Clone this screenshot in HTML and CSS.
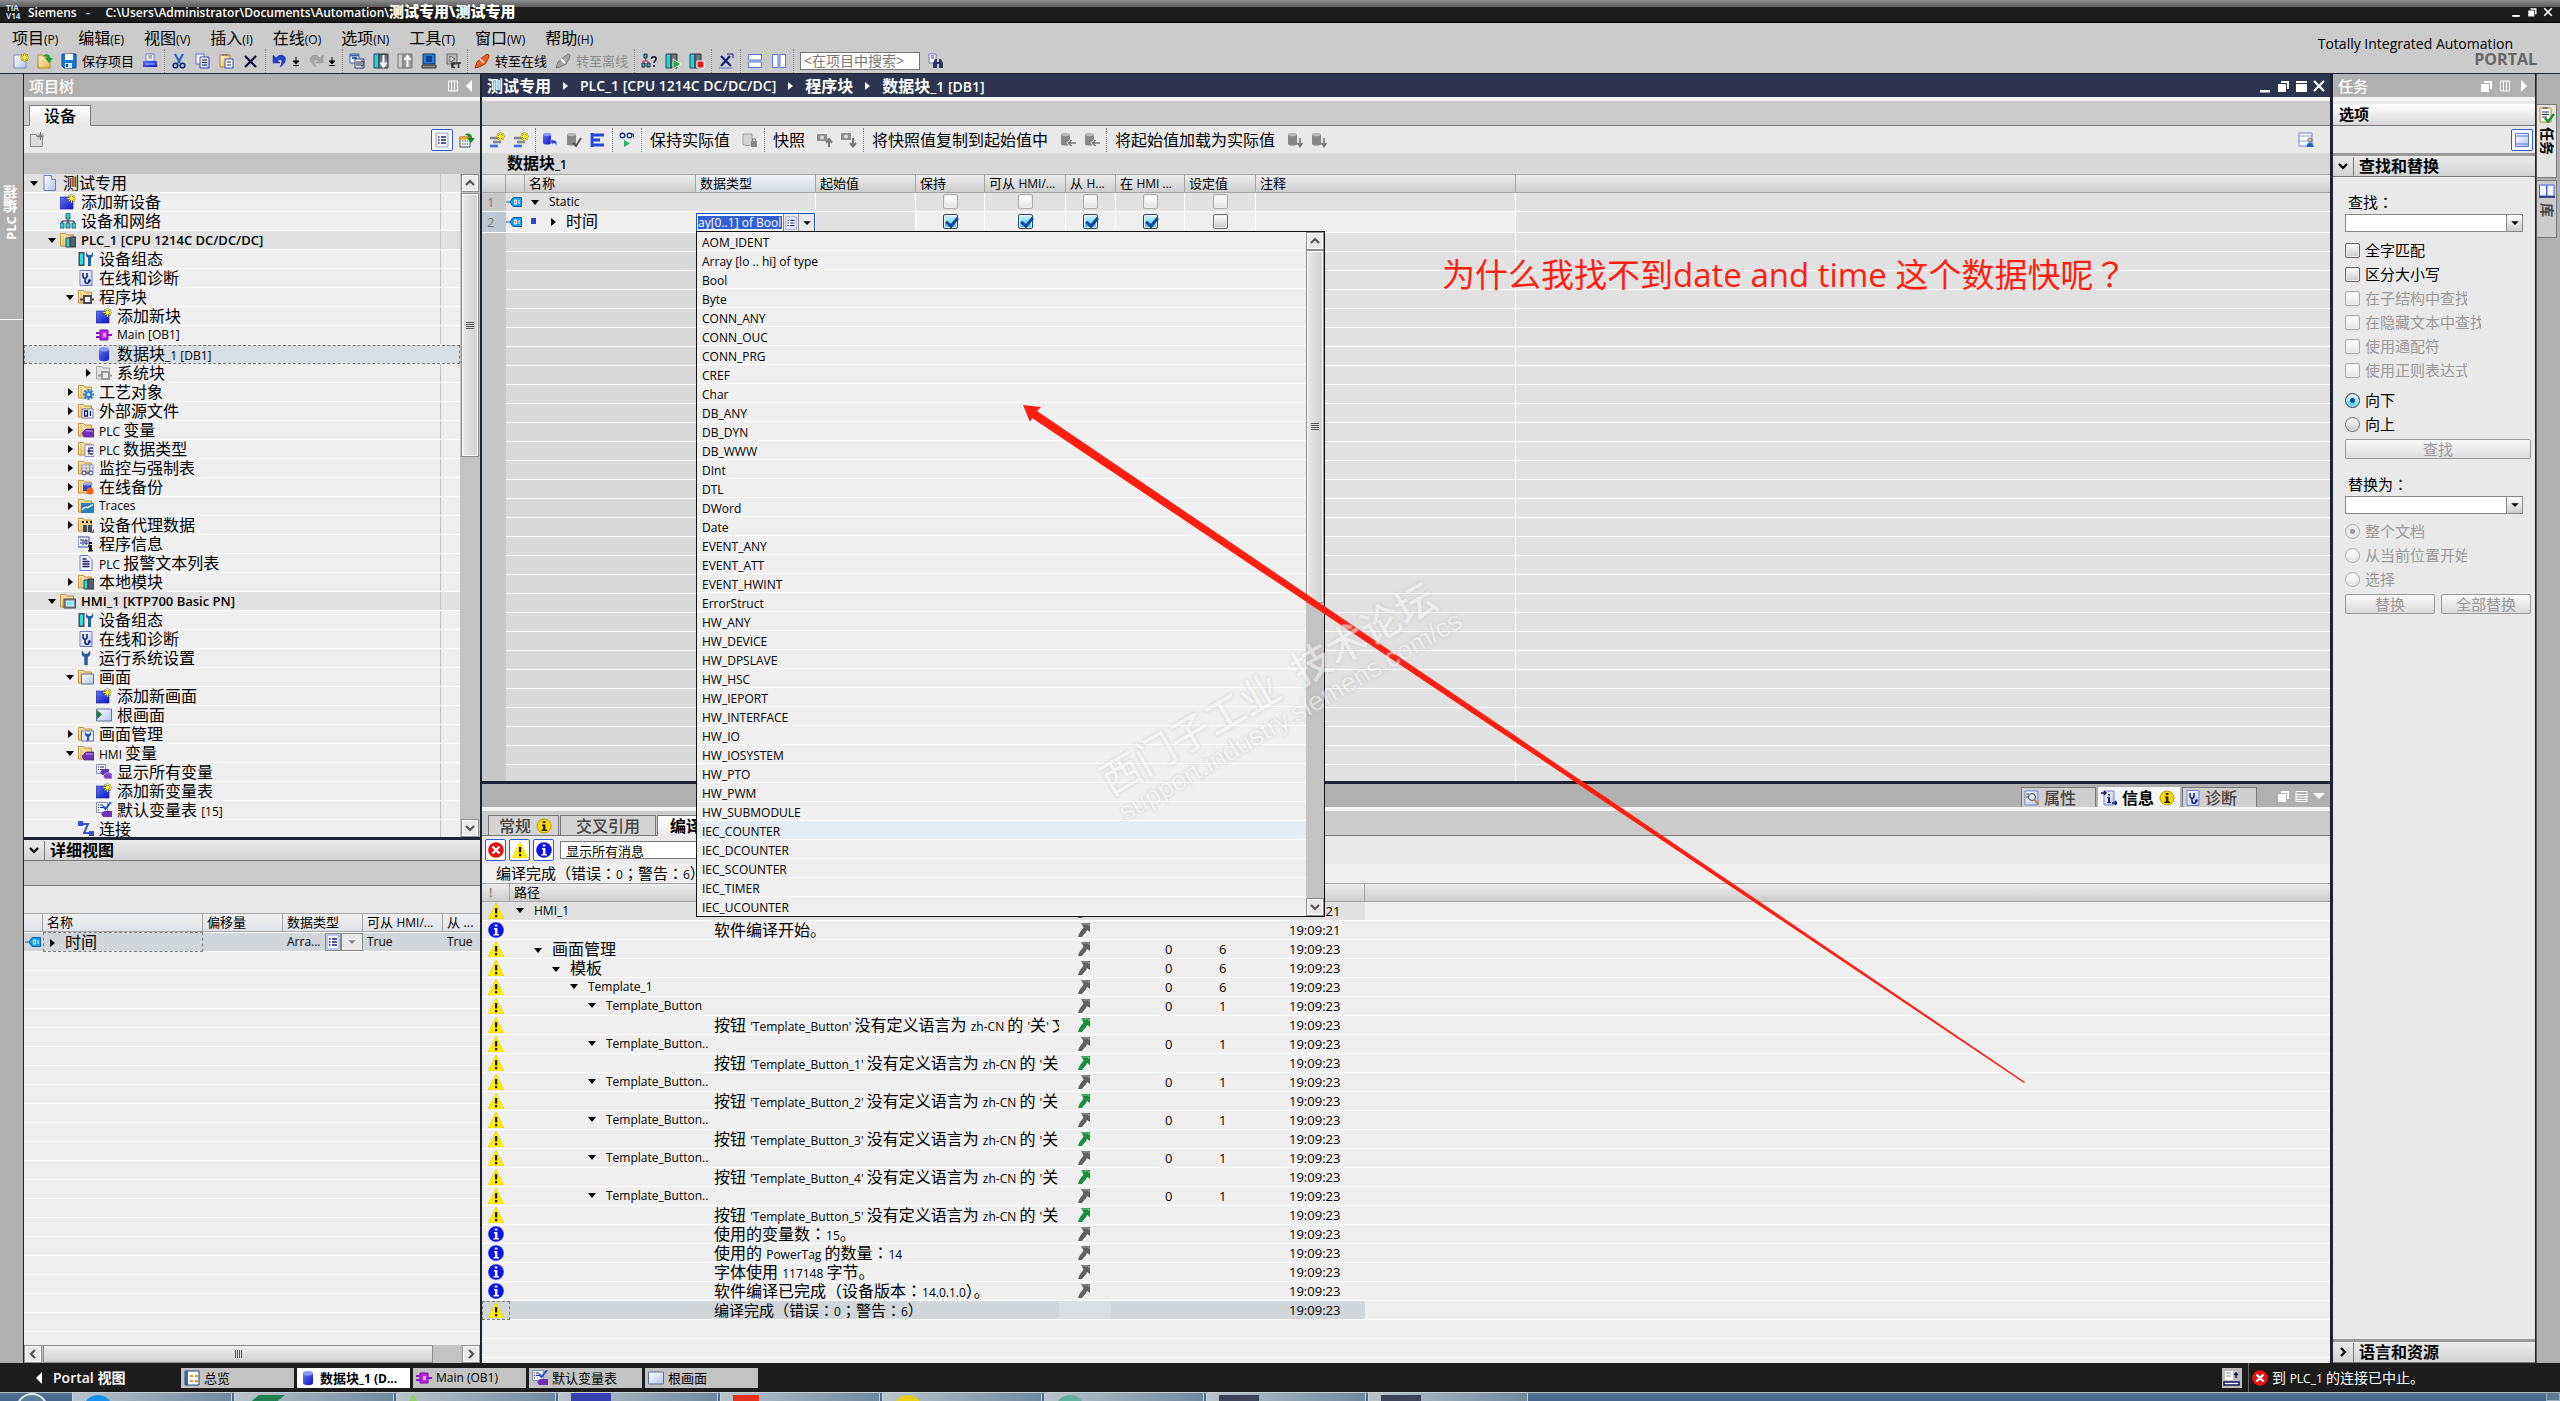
FILE: index.html
```html
<!DOCTYPE html>
<html lang="zh-CN">
<head>
<meta charset="utf-8">
<title>Siemens - 测试专用</title>
<link rel="stylesheet" href="styles.css">
</head>
<body>
<svg class="sprite" aria-hidden="true">
  <defs>
    <linearGradient id="gp" x1="0" y1="0" x2="1" y2="1"><stop offset="0" stop-color="#fff"/><stop offset="1" stop-color="#b4c4f0"/></linearGradient>
    <linearGradient id="gf" x1="0" y1="0" x2="1" y2="1"><stop offset="0" stop-color="#fff3c8"/><stop offset="1" stop-color="#e8b850"/></linearGradient>
    <linearGradient id="gb" x1="0" y1="0" x2="1" y2="1"><stop offset="0" stop-color="#5a78f0"/><stop offset="1" stop-color="#1414c8"/></linearGradient>
    <linearGradient id="gt" x1="0" y1="0" x2="0" y2="1"><stop offset="0" stop-color="#5a5c68"/><stop offset="1" stop-color="#9a9ca6"/></linearGradient>
  </defs>
  <symbol id="star" viewBox="0 0 16 16"><path d="M11.500 0v9M7 4.500h9M8.500 1.500l6 6M14.500 1.500l-6 6" stroke="#8a8a10" stroke-width="1.600"/><path d="M11.500 .5v8M7.500 4.500h8M9 2l5 5M14 2l-5 5" stroke="#ffee30" stroke-width="1"/></symbol>
  <symbol id="page" viewBox="0 0 16 16"><path d="M2 .5h7.500l4 4v11H2z" fill="url(#gp)" stroke="#6c7cc0"/><path d="M9.500.5v4h4" fill="#fff" stroke="#6c7cc0"/></symbol>
  <symbol id="new" viewBox="0 0 16 16"><path d="M1 2h8v3h4v10H1z" fill="url(#gp)" stroke="#7c8cc8"/><use href="#star"/></symbol>
  <symbol id="newgray" viewBox="0 0 16 16"><path d="M1.500 2.500h6v2h6v10h-12z" fill="#dcdcdc" stroke="#8c8c8c"/><path d="M11.500 0v8M8 4h7M9 1.500l5 5M14 1.500l-5 5" stroke="#777"/></symbol>
  <symbol id="open" viewBox="0 0 16 16"><path d="M1 2h5l1 2h6v11H1z" fill="url(#gf)" stroke="#b88820"/><path d="M6 3c3-3 7-2 7 2h3l-4 5-4-5h2c0-2-2-2-4-2z" fill="#18a030"/></symbol>
  <symbol id="save" viewBox="0 0 16 16"><path d="M1 1h14v14H3l-2-2z" fill="#1878d0" stroke="#0c4890"/><path d="M4 1h8v6H4z" fill="#fff"/><path d="M4 10h7v5H4z" fill="#d8e8f8"/><path d="M5 11h2v3H5z" fill="#0c4890"/></symbol>
  <symbol id="print" viewBox="0 0 16 16"><path d="M4 1h8v7H4z" fill="#fff" stroke="#667ad0"/><path d="M6 3h4M6 5h4" stroke="#667"/><path d="M1 8h14v6H1z" fill="url(#gb)"/><path d="M3 11h10" stroke="#a8b8ff"/></symbol>
  <symbol id="cut" viewBox="0 0 16 16"><path d="M4 1l5 9M12 1L7 10" stroke="#2060c0" stroke-width="2"/><circle cx="4.500" cy="12.500" r="2.300" fill="none" stroke="#102878" stroke-width="1.600"/><circle cx="11.500" cy="12.500" r="2.300" fill="none" stroke="#102878" stroke-width="1.600"/></symbol>
  <symbol id="copy" viewBox="0 0 16 16"><path d="M1 1h8v10H1z" fill="#fff" stroke="#5468c0"/><path d="M5 4h9v11H5z" fill="url(#gp)" stroke="#3448b0"/><path d="M7 7h5M7 9.500h5M7 12h5" stroke="#223"/></symbol>
  <symbol id="paste" viewBox="0 0 16 16"><path d="M1 2h10v12H1z" fill="url(#gf)" stroke="#a88020"/><path d="M3 1h6v2H3z" fill="#888"/><path d="M6 6h8v9H6z" fill="#fff" stroke="#3448b0"/><path d="M8 9h4M8 12h4" stroke="#223"/></symbol>
  <symbol id="del" viewBox="0 0 16 16"><path d="M2 3l11 11M13 3L2 14" stroke="#101040" stroke-width="2.200"/></symbol>
  <symbol id="undo" viewBox="0 0 16 16"><path d="M1 2v8h7L5.500 7.500C9 5 12 7 8 14c8-5 7-13-1-11.500L4 5z" fill="#2040d0" stroke="#102090" stroke-width=".5"/></symbol>
  <symbol id="redo" viewBox="0 0 16 16"><path d="M15 2v8H8l2.500-2.500C7 5 4 7 8 14 0 9 1 1 9 2.500L12 5z" fill="#a8a8a8" stroke="#888" stroke-width=".5"/></symbol>
  <symbol id="dd" viewBox="0 0 8 16"><path d="M4 4v4M1 8h6L4 11zM1 12.500h6" stroke="currentColor" fill="currentColor"/></symbol>
  <symbol id="compile" viewBox="0 0 16 16"><path d="M1 1h9v9H1z" fill="#fff" stroke="#3860a8"/><path d="M1 2.500h9M3 5h5" stroke="#3860a8" stroke-width="2"/><path d="M6 6h9v9H6z" fill="#f4f6ff" stroke="#223c88"/><path d="M8 8v5M10 8v5M12 8h2v5h-2z" stroke="#223" fill="none"/></symbol>
  <symbol id="dl" viewBox="0 0 16 16"><path d="M1 1h5v14H1z" fill="#28d0d8" stroke="#184858"/><path d="M6 1h9v14H6z" fill="url(#gt)" stroke="#333"/><path d="M10.500 2v11M7.500 9.500l3 4 3-4" fill="none" stroke="#fff" stroke-width="2"/></symbol>
  <symbol id="ul" viewBox="0 0 16 16"><path d="M1 1h5v14H1z" fill="#ccc" stroke="#777"/><path d="M6 1h9v14H6z" fill="#999" stroke="#777"/><path d="M10.500 14V4M7.500 7l3-4 3 4" fill="none" stroke="#fff" stroke-width="2"/></symbol>
  <symbol id="sim" viewBox="0 0 16 16"><path d="M2 1h12v10H2z" fill="#2080e0" stroke="#234"/><path d="M5 3h6v6H5z" fill="#104090"/><path d="M1 12h14v3H1z" fill="#888" stroke="#333"/></symbol>
  <symbol id="rt" viewBox="0 0 16 16"><path d="M2 1h10v10H2z" fill="#bbb" stroke="#666"/><path d="M5 3l5 3-5 3z" fill="#fff" stroke="#555"/><path d="M7 15v-5h3l-3 3 3 2M11 10h5M13.500 10v5" stroke="#333" fill="none" stroke-width="1.500"/></symbol>
  <symbol id="plug" viewBox="0 0 16 16"><path d="M1 15l2-6 6-5 4-3 2 1-1 4-3 5-6 3z" fill="#f06020" stroke="#a83008"/><path d="M6 6l4 4" stroke="#fff" stroke-width="1.200"/></symbol>
  <symbol id="plugoff" viewBox="0 0 16 16"><path d="M1 15l2-6 6-5 4-3 2 1-1 4-3 5-6 3z" fill="#a4a4a4" stroke="#777"/><path d="M6 6l4 4" stroke="#fff" stroke-width="2"/></symbol>
  <symbol id="acc" viewBox="0 0 16 16"><path d="M3 1h3v4H3zM1 10h3v4H1zM6 10h3v4H6z" fill="#28b8b8" stroke="#224"/><path d="M4.500 5v3M2 10V8h5v2" fill="none" stroke="#b02050"/><path d="M10.500 6c0-3 5-3 4.500 0 0 2-2 2-2 4M13 12v2" fill="none" stroke="#112" stroke-width="1.600"/></symbol>
  <symbol id="start" viewBox="0 0 16 16"><path d="M1 1h5v14H1z" fill="#28d0d8" stroke="#184858"/><path d="M6 1h6v14H6z" fill="#707480" stroke="#333"/><path d="M8 6l8 5-8 5z" fill="#20b040" stroke="#fff" stroke-width=".8"/></symbol>
  <symbol id="stop" viewBox="0 0 16 16"><path d="M1 1h5v14H1z" fill="#28d0d8" stroke="#184858"/><path d="M6 1h6v14H6z" fill="#707480" stroke="#333"/><path d="M8 8h7v7H8z" fill="#e81818" stroke="#fff"/></symbol>
  <symbol id="xref" viewBox="0 0 16 16"><path d="M3 3l10 10M12 3L3 13" stroke="#102080" stroke-width="2.200"/><path d="M9 1h6v4" fill="none" stroke="#102080"/><path d="M1 15h13" stroke="#5870d0"/></symbol>
  <symbol id="sph" viewBox="0 0 16 16"><path d="M1.500 1.500h13v5.500h-13zM1.500 9h13v5.500h-13z" fill="#fff" stroke="#5878e0"/></symbol>
  <symbol id="spv" viewBox="0 0 16 16"><path d="M1.500 1.500h5.500v13H1.500zM9 1.500h5.500v13H9z" fill="#fff" stroke="#5878e0"/></symbol>
  <symbol id="win" viewBox="0 0 16 16"><path d="M1.500 1.500h13v13h-13z" fill="url(#gp)" stroke="#5878e0"/><path d="M1.500 4h13M1.500 12h13" stroke="#5878e0"/></symbol>
  <symbol id="find" viewBox="0 0 16 16"><path d="M1 1h7v9H1z" fill="#fff" stroke="#667ad0"/><path d="M3 3h3M3 5h3" stroke="#446"/><path d="M5 15v-5l2-4h2v3h2V6h2l2 4v5h-4v-4H9v4z" fill="#283860"/></symbol>
  <symbol id="add" viewBox="0 0 16 16"><path d="M0 3h13v12H0z" fill="url(#gb)" stroke="#1818a0" stroke-width=".6"/><use href="#star"/></symbol>
  <symbol id="net" viewBox="0 0 16 16"><path d="M6 0h4v6H6zM0 10h4v5H0zM6 10h4v5H6zM12 10h4v5h-4z" fill="#38c8d0" stroke="#205868" stroke-width=".8"/><path d="M8 6v4M2 10V8h12v2" fill="none" stroke="#224"/></symbol>
  <symbol id="folder" viewBox="0 0 16 16"><path d="M.5 1.500h5l1 1.500h7v11H.5z" fill="url(#gf)" stroke="#c09038"/><path d="M3 3v10" stroke="#d8b060"/></symbol>
  <symbol id="folderg" viewBox="0 0 16 16"><path d="M.5 1.500h5l1 1.500h7v11H.5z" fill="#e4e4e4" stroke="#a4a4a4"/></symbol>
  <symbol id="o-plc" viewBox="0 0 16 16"><path d="M6 6h4v9H6z" fill="#30d8d8" stroke="#244"/><path d="M10 5h6v10h-6z" fill="#556070" stroke="#334"/></symbol>
  <symbol id="o-hmi" viewBox="0 0 16 16"><path d="M4 6h11.500v9H4z" fill="#888c98" stroke="#445"/><path d="M6.500 8h7v5h-7z" fill="#80e8f0" stroke="#fff" stroke-width=".6"/></symbol>
  <symbol id="o-blk" viewBox="0 0 16 16"><path d="M6 7h7v7H6z" fill="#fff" stroke="#484c58" stroke-width="2"/><path d="M2 10.500h4M13 10.500h3" stroke="#484c58" stroke-width="2"/></symbol>
  <symbol id="o-blkg" viewBox="0 0 16 16"><path d="M6 7h7v7H6z" fill="#eee" stroke="#999" stroke-width="2"/><path d="M2 10.500h4M13 10.500h3" stroke="#999" stroke-width="2"/></symbol>
  <symbol id="o-gear" viewBox="0 0 16 16"><path d="M10.500 5v11M5 10.500h11M6.500 6.500l8 8M14.500 6.500l-8 8" stroke="#2878e0" stroke-width="2"/><circle cx="10.500" cy="10.500" r="1.500" fill="#fff"/></symbol>
  <symbol id="o-01" viewBox="0 0 16 16"><path d="M4 6h11v9H4z" fill="#fff" stroke="#707890"/><path d="M6.500 8h3v5h-3zM12.500 8v5" fill="none" stroke="#101860" stroke-width="1.400"/></symbol>
  <symbol id="o-tag" viewBox="0 0 16 16"><path d="M4 11l4-4h8v8H6z" fill="#7030b8" stroke="#481080" stroke-width=".6"/><path d="M8 9h7" stroke="#c8a0f0"/></symbol>
  <symbol id="o-str" viewBox="0 0 16 16"><path d="M7 4h9v11.500H7z" fill="#f4f6ff" stroke="#8890c0"/><path d="M12 7h3M9.500 10h5.500M12 13h3M11 6.500v7" stroke="#202878" stroke-width="1.300"/></symbol>
  <symbol id="o-watch" viewBox="0 0 16 16"><path d="M4 5h11v6H4z" fill="#fff" stroke="#8890a8"/><path d="M4 8h11M8 5v6M11.500 5v6" stroke="#8890a8"/><circle cx="6" cy="13" r="2" fill="#fff" stroke="#203890"/><circle cx="13" cy="13" r="2" fill="#fff" stroke="#203890"/><path d="M8 13h3" stroke="#203890"/></symbol>
  <symbol id="o-bak" viewBox="0 0 16 16"><path d="M5 5h8v7H5z" fill="#3048d0"/><ellipse cx="9" cy="5" rx="4" ry="1.500" fill="#90a8ff"/><circle cx="12" cy="12" r="3.600" fill="#f06018"/></symbol>
  <symbol id="o-trc" viewBox="0 0 16 16"><path d="M3 5h13v10H3z" fill="#2880b8"/><path d="M4 12c3-5 5-1 7-3s2-2 4-2" fill="none" stroke="#fff" stroke-width="1.300"/></symbol>
  <symbol id="o-prx" viewBox="0 0 16 16"><path d="M4 4h2v2H4zM8 4h2v2H8zM12 4h2v2h-2z" fill="#222"/><path d="M5 8h4v7H5zM10 8h4v7h-4z" fill="#444c58"/><path d="M12 15h4v-3" stroke="#222" fill="none"/></symbol>
  <symbol id="o-scr" viewBox="0 0 16 16"><path d="M3.500 5h12v10h-12z" fill="url(#gp)" stroke="#607090"/></symbol>
  <symbol id="o-wr" viewBox="0 0 16 16"><path d="M3.500 5h12v10h-12z" fill="#dfe8fa" stroke="#6078a0"/><path d="M7 6v3l2 2v4h2v-4l2-2V6l-2 2H9z" fill="#2058a8"/></symbol>
  <symbol id="cfg" viewBox="0 0 16 16"><path d="M.5 1h6v14h-6z" fill="#444c58"/><path d="M2 2.500h3v11H2z" fill="#30e0e0"/><path d="M8 1v4l2 2v8h3V7l2-2V1l-2 3h-3z" fill="#2060a8"/></symbol>
  <symbol id="wrench" viewBox="0 0 16 16"><path d="M4 1v4l2.500 2v8h3V7L12 5V1l-2.500 3h-3z" fill="#2060a8" stroke="#18487c" stroke-width=".4"/></symbol>
  <symbol id="diag" viewBox="0 0 16 16"><path d="M2 .5h12v15H2z" fill="url(#gp)" stroke="#7080d0"/><path d="M5 3v3c0 3 4 3 4 0V3M7 8v3c0 3 4 3 4 0" fill="none" stroke="#101868" stroke-width="1.500"/><circle cx="11.500" cy="10.500" r="1.300" fill="#101868"/></symbol>
  <symbol id="ob" viewBox="0 0 16 16"><path d="M4 3h8v10H4z" fill="#c020f0" stroke="#7010a0"/><path d="M7 6h3v4H7z" fill="#f0b0ff"/><path d="M0 6h4M0 10h4M12 8h4" stroke="#9010d0" stroke-width="2"/></symbol>
  <symbol id="db" viewBox="0 0 16 16"><path d="M3 3v10c0 3 10 3 10 0V3z" fill="url(#gb)"/><ellipse cx="8" cy="3.300" rx="5" ry="2.300" fill="#8898ff"/></symbol>
  <symbol id="info" viewBox="0 0 16 16"><path d="M0 1h11v10H0z" fill="#f4f6ff" stroke="#3850a0"/><path d="M2 4h2M2 7h2M5 3v6M7 4h2v4H7z" stroke="#102070" fill="none"/><path d="M11 6h3v2h-3zM10 9h4v5h1v1.500h-5V14h1v-3h-1z" fill="#111"/></symbol>
  <symbol id="txt" viewBox="0 0 16 16"><path d="M2 .5h8l4 4v11H2z" fill="#eef2ff" stroke="#7080d0"/><path d="M4.500 4h4M4.500 6.500h7M4.500 9h7M4.500 11.500h7" stroke="#181c60" stroke-width="1.300"/></symbol>
  <symbol id="root" viewBox="0 0 16 16"><path d="M.5 2h15v12H.5z" fill="url(#gp)" stroke="#607090"/><path d="M1 3l5 4.500L1 12z" fill="#108828"/></symbol>
  <symbol id="scr" viewBox="0 0 16 16"><path d="M.5 2h15v12H.5z" fill="url(#gp)" stroke="#607090"/></symbol>
  <symbol id="alltag" viewBox="0 0 16 16"><path d="M.5.5h9v9h-9z" fill="#f4f6ff" stroke="#8890c0"/><path d="M2 3h1M4 3h4M2 5.500h1M4 5.500h3" stroke="#202878"/><path d="M4 8l3-3h6v6H6z" fill="#6838b0"/><path d="M7 12l3-3h6v6H9z" fill="#8040c8" stroke="#fff" stroke-width=".5"/></symbol>
  <symbol id="deftag" viewBox="0 0 16 16"><path d="M.5.500h11v10h-11z" fill="#f4f6ff" stroke="#8890c0"/><path d="M2 3h1M4 3h3M2 5.500h1M4 5.500h3M2 8h1" stroke="#202878"/><path d="M7 4l2.500 3L15 0" fill="none" stroke="#2050d0" stroke-width="2"/><path d="M5 12l3-3h8v6H7z" fill="#7030b8"/></symbol>
  <symbol id="conn" viewBox="0 0 16 16"><path d="M3 3h7l-4 9h7" fill="none" stroke="#3858d0" stroke-width="2"/><path d="M0 0h5v5H0zM11 10h5v5h-5z" fill="#3050d8"/></symbol>
  <symbol id="tag" viewBox="0 0 16 16"><path d="M0 8h4l3-4.500h8.500v9H7L4 8" fill="#18a0e8" stroke="#0860a8"/><path d="M8.500 6h2v4h-2zM13 6v4" fill="none" stroke="#fff"/></symbol>
  <symbol id="lst" viewBox="0 0 16 16"><path d="M2 1h12v14H2z" fill="#f4f6ff" stroke="#8ca0e0"/><path d="M4 5h1.500M7 5h5M4 8h1.500M7 8h5M4 11h1.500M7 11h5" stroke="#202878" stroke-width="1.300"/></symbol>
  <symbol id="ins" viewBox="0 0 16 16"><path d="M1 6h9M4 10h8" stroke="#7c8494" stroke-width="2.600"/><path d="M1 14h8" stroke="#4868e0" stroke-width="2.600"/><use href="#star"/></symbol>
  <symbol id="dbr" viewBox="0 0 16 16"><path d="M1 2v9c0 2 8 2 8 0V2z" fill="url(#gb)"/><ellipse cx="5" cy="2.500" rx="4" ry="1.700" fill="#8898ff"/><path d="M8 9l3-2v1.500c3-1 5 2 3 6 0-3-1-3.500-3-3V13z" fill="#2040d0" stroke="#fff" stroke-width=".4"/></symbol>
  <symbol id="dbg" viewBox="0 0 16 16"><path d="M1 2v10c0 2 9 2 9 0V2z" fill="#888"/><ellipse cx="5.500" cy="2.500" rx="4.500" ry="1.700" fill="#bbb"/><path d="M7 11l3 3 5-8" fill="none" stroke="#555" stroke-width="2"/></symbol>
  <symbol id="dbc" viewBox="0 0 16 16"><path d="M1 2v10c0 2 9 2 9 0V2z" fill="#888"/><ellipse cx="5.500" cy="2.500" rx="4.500" ry="1.700" fill="#bbb"/><path d="M16 11H9M11.500 8L8.500 11l3 3" fill="none" stroke="#e9e9e9" stroke-width="3"/><path d="M16 11H9M11.500 8L8.500 11l3 3" fill="none" stroke="#777" stroke-width="1.500"/></symbol>
  <symbol id="dbd" viewBox="0 0 16 16"><path d="M1 2v10c0 2 9 2 9 0V2z" fill="#888"/><ellipse cx="5.500" cy="2.500" rx="4.500" ry="1.700" fill="#bbb"/><path d="M13 6v8M10.500 11l2.500 3.500 2.500-3.500" fill="none" stroke="#777" stroke-width="1.600"/></symbol>
  <symbol id="dbl" viewBox="0 0 16 16"><path d="M1 2v10c0 2 9 2 9 0V2z" fill="#d4d4d4" stroke="#999"/><path d="M9 9h6v6H9z" fill="#888"/><path d="M10.500 9V7h3v2" fill="none" stroke="#777"/></symbol>
  <symbol id="net2" viewBox="0 0 16 16"><path d="M2 1v14M2 3h12M2 8h8M2 13h12" stroke="#2848d8" stroke-width="2.800"/></symbol>
  <symbol id="glas" viewBox="0 0 16 16"><circle cx="3.500" cy="3.500" r="2.300" fill="#fff" stroke="#203080" stroke-width="1.400"/><circle cx="10.500" cy="3.500" r="2.300" fill="#fff" stroke="#203080" stroke-width="1.400"/><path d="M12.500 2h2v3" stroke="#203080" fill="none"/><path d="M5 8l6 3.500L5 15z" fill="#20b860"/></symbol>
  <symbol id="cam" viewBox="0 0 16 16"><path d="M0 2h10v7H0z" fill="#909090"/><circle cx="5" cy="5.500" r="2" fill="#ddd"/><path d="M12 15V8M9 10.500L12 7l3 3.500" fill="none" stroke="#777" stroke-width="2"/></symbol>
  <symbol id="camd" viewBox="0 0 16 16"><path d="M0 1h10v7H0z" fill="#909090"/><circle cx="5" cy="4.500" r="2" fill="#ddd"/><path d="M12 6v8M9 11l3 3.500 3-3.500" fill="none" stroke="#777" stroke-width="2"/></symbol>
  <symbol id="dict" viewBox="0 0 16 16"><path d="M1 5h10v10H1z" fill="#fff" stroke="#345"/><path d="M1 6h10" stroke="#e8a020" stroke-width="3"/><path d="M3 9h6M3 12h6" stroke="#234" stroke-dasharray="1.500 1"/><path d="M6 3c3-3 7-1 7 3h3l-4 5-4-5h2c0-2-2-3-4-3z" fill="#188828"/></symbol>
  <symbol id="usr" viewBox="0 0 16 16"><path d="M1 1h13v13H1z" fill="#fff" stroke="#6c80d8"/><path d="M1 4h13M1 9h9" stroke="#8c9ce0"/><circle cx="12" cy="8" r="2" fill="#f0c8a0" stroke="#223" stroke-width=".6"/><path d="M8.500 15c0-6 7-6 7 0z" fill="#1868b8"/></symbol>
  <symbol id="goto" viewBox="0 0 16 16"><path d="M5 1h9v9l-3-2c-1 3-3 4-5 7H2c1-4 3-6 5.500-9.500z" fill="currentColor"/><path d="M6 2h7v2" stroke="#fff" stroke-opacity=".4" fill="none"/></symbol>
  <symbol id="warn" viewBox="0 0 16 16"><path d="M8 0l8 16H0z" fill="#ffee00" stroke="#d8c800" stroke-width=".5"/><path d="M7 5h2.200v5.500H7zM7 12h2.200v2.200H7z" fill="#111"/></symbol>
  <symbol id="inf" viewBox="0 0 16 16"><circle cx="8" cy="8" r="7.800" fill="#0c14e8"/><path d="M6.800 2.500h2.600v2H6.800zM6 6h3.400v6H11v1.500H5.500V12H7V7.500H6z" fill="#fff"/></symbol>
  <symbol id="infy" viewBox="0 0 16 16"><circle cx="8" cy="8" r="7" fill="#f8d800" stroke="#b89800"/><path d="M6.800 3h2.600v2H6.800zM6 6.500h3.400v5H11V13H5.500v-1.500H7V8H6z" fill="#222"/></symbol>
  <symbol id="err" viewBox="0 0 16 16"><circle cx="8" cy="8" r="7.800" fill="#e81010"/><path d="M4.500 4.500l7 7M11.500 4.500l-7 7" stroke="#fff" stroke-width="2.400"/></symbol>
  <symbol id="min" viewBox="0 0 16 16"><path d="M3 12h10v2.500H3z" fill="currentColor"/></symbol>
  <symbol id="rest" viewBox="0 0 16 16"><path d="M6 3h8v8h-2V5H6z" fill="currentColor"/><path d="M3 6h8v8H3z" fill="currentColor"/></symbol>
  <symbol id="max" viewBox="0 0 16 16"><path d="M3 3h11v2H3zM3 6h11v8H3z" fill="currentColor"/></symbol>
  <symbol id="cls" viewBox="0 0 16 16"><path d="M3 3l10 10M13 3L3 13" stroke="currentColor" stroke-width="2.200"/></symbol>
  <symbol id="bars" viewBox="0 0 16 16"><path d="M3.500 3h9v10h-9zM6.500 3v10M9.500 3v10" fill="none" stroke="currentColor"/></symbol>
  <symbol id="rows" viewBox="0 0 16 16"><path d="M3 3.500h11v10H3zM3 6.500h11M3 9h11M3 11.500h11" fill="none" stroke="currentColor"/></symbol>
  <symbol id="tl" viewBox="0 0 16 16"><path d="M11 2v12L5 8z" fill="currentColor"/></symbol>
  <symbol id="tr" viewBox="0 0 16 16"><path d="M5 2v12l6-6z" fill="currentColor"/></symbol>
  <symbol id="td" viewBox="0 0 16 16"><path d="M2 5h12l-6 6z" fill="currentColor"/></symbol>
  <symbol id="cd" viewBox="0 0 16 16"><path d="M4 6l4 4 4-4" fill="none" stroke="currentColor" stroke-width="2.200"/></symbol>
  <symbol id="cu" viewBox="0 0 16 16"><path d="M4 10l4-4 4 4" fill="none" stroke="currentColor" stroke-width="2.200"/></symbol>
  <symbol id="cl" viewBox="0 0 16 16"><path d="M10 4L6 8l4 4" fill="none" stroke="currentColor" stroke-width="2.200"/></symbol>
  <symbol id="cr" viewBox="0 0 16 16"><path d="M6 4l4 4-4 4" fill="none" stroke="currentColor" stroke-width="2.200"/></symbol>
  <symbol id="prop" viewBox="0 0 16 16"><path d="M1 1h13v14H1z" fill="url(#gp)" stroke="#7080d0"/><path d="M2 4h3M2 7h3" stroke="#446"/><circle cx="8" cy="7" r="3.500" fill="#dde6ff" stroke="#445"/><path d="M10.500 9.500l4 5" stroke="#c08020" stroke-width="2"/></symbol>
  <symbol id="msg" viewBox="0 0 16 16"><path d="M3 1h10v14H3z" fill="url(#gp)" stroke="#7080d0"/><path d="M0 3h4M3 1l2 2-2 2M11 13h5M14 11l2 2-2 2" stroke="#101868" fill="none" stroke-width="1.500"/><path d="M7 4h2v1.500H7zM6 7h3v5h1v1H6v-1h1V8H6z" fill="#101868"/></symbol>
  <symbol id="clip" viewBox="0 0 16 16"><path d="M1 1h11v14H1z" fill="#fff" stroke="#b88820"/><path d="M4 0h5v2H4z" fill="#777"/><path d="M3 5h7M3 7.500h7M3 10h5" stroke="#202878"/><path d="M6 11l3 3.500L15 7" fill="none" stroke="#189030" stroke-width="2.500"/></symbol>
  <symbol id="book" viewBox="0 0 16 16"><path d="M.5 2h7v11h-7zM8 2h7v11H8z" fill="#f4f8ff" stroke="#4060e0"/><path d="M0 14h16" stroke="#182060" stroke-width="1.500"/></symbol>
  <symbol id="ovw" viewBox="0 0 16 16"><path d="M1 1h14v14H1z" fill="#fff" stroke="#246"/><path d="M1 1h3v14H1z" fill="#3868b0"/><path d="M6 5h3v2H6zM11 5h3v2h-3zM6 10h3v2H6zM11 10h3v2h-3z" fill="#e09820"/></symbol>
  <symbol id="tray" viewBox="0 0 20 20"><path d="M0 0h20v20H0z" fill="#bcbcc0"/><path d="M3 3h8v9H3z" fill="#fff"/><path d="M4 5h5M4 8h5" stroke="#88a"/><path d="M14 10V5M12 7l2-2 2 2" fill="none" stroke="#101050" stroke-width="1.500"/><path d="M2 14h15v3H2z" fill="#fff" stroke="#101050" stroke-width="1.500"/></symbol>
</svg>

<header class="titlebar">
  <span class="logo">TIA<br>V14</span>
  <h1>Siemens&nbsp;&nbsp; -&nbsp;&nbsp;&nbsp;&nbsp; C:\Users\Administrator\Documents\Automation\<b>测试专用\测试专用</b></h1>
  <span class="wbtns"><button aria-label="最小化" data-i="min"></button><button aria-label="还原" data-i="rest"></button><button aria-label="关闭" data-i="cls"></button></span>
</header>
<div class="menuarea">
  <div>
    <nav class="menu"><a href="#">项目(P)</a><a href="#">编辑(E)</a><a href="#">视图(V)</a><a href="#">插入(I)</a><a href="#">在线(O)</a><a href="#">选项(N)</a><a href="#">工具(T)</a><a href="#">窗口(W)</a><a href="#">帮助(H)</a></nav>
    <div class="toolbar main" data-tools="new open save t:保存项目 print | cut copy paste del | undo dd redo dd | compile dl ul sim rt | plug t:转至在线 plugoff g:转至离线 | acc start stop | xref | sph spv |"><input class="search" aria-label="搜索" placeholder="&lt;在项目中搜索&gt;"><button class="tb" aria-label="查找" data-i="find"></button></div>
  </div>
  <div class="brand">Totally Integrated Automation<b>PORTAL</b></div>
</div>

<main class="work">
  <div class="rail left"><span>PLC 编程</span></div>

  <aside class="side">
    <div class="phead gray"><h2>项目树</h2><span class="pb"><button aria-label="锁定" data-i="bars"></button><button aria-label="折叠" data-i="tl"></button></span></div>
    <div class="tabzone"><button class="tab on">设备</button></div>
    <div class="toolbar"><button class="tb" aria-label="新建文件夹" data-i="newgray"></button><span class="grow"></span><button class="tb framed" aria-label="列表" data-i="lst"></button><button class="tb" aria-label="详情" data-i="dict"></button></div>
    <div class="blank"></div>
    <div class="treebox">
      <ul class="tree" id="tree"></ul>
      <div class="vsb"><button aria-label="向上" data-i="cu"></button><i class="thumb tree-thumb"></i><button class="end" aria-label="向下" data-i="cd"></button></div>
    </div>
    <div class="sect top"><button aria-label="折叠详细视图" data-i="cd"></button><h2>详细视图</h2></div>
    <div class="dstrip"></div>
    <div class="dtool"></div>
    <div class="dbox">
      <table class="dtable">
        <colgroup><col class="w19"><col class="w160"><col class="w80"><col class="w80"><col class="w80"><col></colgroup>
        <thead><tr><th></th><th>名称</th><th>偏移量</th><th>数据类型</th><th>可从 HMI/...</th><th>从 ...</th></tr></thead>
        <tbody><tr><td><span data-i="tag"></span></td><td class="nm"><i class="ar r"></i>时间</td><td></td><td class="ty">Arra...<span class="bt"><button aria-label="选择" data-i="lst"></button><button class="wide" aria-label="展开" data-i="td"></button></span></td><td>True</td><td>True</td></tr></tbody>
      </table>
      <div class="lines light"></div>
      <div class="hsb"><button aria-label="向左" data-i="cl"></button><i class="hthumb"></i><button aria-label="向右" data-i="cr"></button></div>
    </div>
  </aside>

  <section class="center">
    <div class="phead navy"><h2 class="crumb"><span>测试专用</span><i></i><span>PLC_1 [CPU 1214C DC/DC/DC]</span><i></i><span>程序块</span><i></i><span>数据块_1 [DB1]</span></h2><span class="pb"><button aria-label="最小化" data-i="min"></button><button aria-label="浮动" data-i="rest"></button><button aria-label="最大化" data-i="max"></button><button aria-label="关闭" data-i="cls"></button></span></div>
    <div class="tabzone"></div>
    <div class="toolbar ed" data-tools="ins ins | dbr dbg net2 | glas | T:保持实际值 dbl | T:快照 cam camd | T:将快照值复制到起始值中 dbc dbc | T:将起始值加载为实际值 dbd dbd"><span class="grow"></span><button class="tb" aria-label="布局" data-i="usr"></button></div>
    <h3 class="dbname">数据块_1</h3>
    <div class="grid">
      <table class="etable">
        <colgroup><col class="w24"><col class="w19"><col class="w171"><col class="w120"><col class="w100"><col class="w69"><col class="w81"><col class="w50"><col class="w69"><col class="w71"><col class="w260"><col></colgroup>
        <thead><tr><th></th><th></th><th>名称</th><th class="hot">数据类型</th><th>起始值</th><th>保持</th><th>可从 HMI/...</th><th>从 H...</th><th>在 HMI ...</th><th>设定值</th><th>注释</th><th></th></tr></thead>
        <tbody>
          <tr><td class="no">1</td><td><span data-i="tag"></span></td><td><i class="ar d"></i>Static</td><td></td><td></td><td class="ck"><input type="checkbox" disabled aria-label="保持"></td><td class="ck"><input type="checkbox" disabled aria-label="可访问"></td><td class="ck"><input type="checkbox" disabled aria-label="可写"></td><td class="ck"><input type="checkbox" disabled aria-label="可见"></td><td class="ck"><input type="checkbox" disabled aria-label="设定值"></td><td></td><td></td></tr>
          <tr class="cur"><td class="no">2</td><td><span data-i="tag"></span></td><td><i class="dot"></i><i class="ar r"></i><span class="fl">时间</span></td><td class="edit"><div class="combo"><input value="ay[0..1] of Bool" aria-label="数据类型"><button aria-label="选择" data-i="lst"></button><button aria-label="展开" class="dn" data-i="td"></button></div>
            <div class="popup"><ul id="types" role="listbox"></ul><div class="vsb"><button aria-label="向上" data-i="cu"></button><i class="thumb pop-thumb"></i><button class="end" aria-label="向下" data-i="cd"></button></div></div></td><td class="ro"></td><td class="ck"><input type="checkbox" checked aria-label="保持"></td><td class="ck"><input type="checkbox" checked aria-label="可访问"></td><td class="ck"><input type="checkbox" checked aria-label="可写"></td><td class="ck"><input type="checkbox" checked aria-label="可见"></td><td class="ck"><input type="checkbox" aria-label="设定值"></td><td></td><td class="ro"></td></tr>
        </tbody>
      </table>
      <div class="lines dark"></div>
    </div>
    <div class="istrip"><div class="itabs"><button><span data-i="prop"></span>属性</button><button class="on"><span data-i="msg"></span>信息<span data-i="infy"></span></button><button><span data-i="diag"></span>诊断</button></div><span class="pb"><button aria-label="浮动" data-i="rest"></button><button aria-label="停靠" data-i="rows"></button><button aria-label="折叠" data-i="td"></button></span></div>
    <div class="tabzone low"><button class="tab">常规<span data-i="infy"></span></button><button class="tab wide">交叉引用</button><button class="tab on">编译</button></div>
    <div class="toolbar flt"><button class="tb framed" aria-label="错误" data-i="err"></button><button class="tb framed" aria-label="警告" data-i="warn"></button><button class="tb framed" aria-label="信息" data-i="inf"></button><select aria-label="消息过滤"><option>显示所有消息</option></select></div>
    <p class="result">编译完成（错误：0；警告：6）</p>
    <div class="logbox">
      <table class="log">
        <colgroup><col class="w28"><col class="w204"><col class="w345"><col class="w52"><col class="w84"><col class="w54"><col class="w116"><col></colgroup>
        <thead><tr><th class="ex">!</th><th>路径</th><th></th><th></th><th></th><th></th><th></th><th></th></tr></thead>
        <tbody id="log"></tbody>
      </table>
      <div class="lines light"></div>
    </div>
  </section>

  <aside class="tasks">
    <div class="phead gray"><h2>任务</h2><span class="pb"><button aria-label="浮动" data-i="rest"></button><button aria-label="锁定" data-i="bars"></button><button aria-label="折叠" data-i="tr"></button></span></div>
    <h3 class="opt">选项</h3>
    <div class="toolbar"><span class="grow"></span><button class="tb framed" aria-label="视图" data-i="win"></button></div>
    <div class="sect"><button aria-label="折叠查找和替换" data-i="cd"></button><h2>查找和替换</h2></div>
    <form class="ff">
      <label class="cap" for="f1">查找：</label>
      <div class="cbx"><input id="f1"><button type="button" aria-label="展开" data-i="td"></button></div>
      <div class="opts">
        <label><input type="checkbox"><span>全字匹配</span></label>
        <label><input type="checkbox"><span class="cut4">区分大小写</span></label>
        <label class="off"><input type="checkbox" disabled><span class="cut6">在子结构中查找</span></label>
        <label class="off"><input type="checkbox" disabled><span class="cut7">在隐藏文本中查找</span></label>
        <label class="off"><input type="checkbox" disabled><span class="cut4">使用通配符</span></label>
        <label class="off"><input type="checkbox" disabled><span class="cut6">使用正则表达式</span></label>
      </div>
      <div class="opts two">
        <label><input type="radio" name="d" checked><span>向下</span></label>
        <label><input type="radio" name="d"><span>向上</span></label>
      </div>
      <div class="btns"><button type="button" disabled>查找</button></div>
      <label class="cap" for="f2">替换为：</label>
      <div class="cbx"><input id="f2"><button type="button" aria-label="展开" data-i="td"></button></div>
      <div class="opts three">
        <label class="off"><input type="radio" name="s" checked disabled><span>整个文档</span></label>
        <label class="off"><input type="radio" name="s" disabled><span class="cut6">从当前位置开始</span></label>
        <label class="off"><input type="radio" name="s" disabled><span>选择</span></label>
      </div>
      <div class="btns"><button type="button" disabled>替换</button><button type="button" disabled>全部替换</button></div>
    </form>
    <div class="sect"><button aria-label="展开语言和资源" data-i="cr"></button><h2>语言和资源</h2></div>
  </aside>

  <div class="rail right"><button class="on"><span data-i="clip"></span><b>任务</b></button><button><span data-i="book"></span><b>库</b></button></div>
</main>

<footer class="status">
  <a class="portal" href="#"><span data-i="tl"></span>Portal 视图</a>
  <nav class="docs"><button><span data-i="ovw"></span>总览</button><button class="on"><span data-i="db"></span>数据块_1 (D...</button><button class="en"><span data-i="ob"></span>Main (OB1)</button><button><span data-i="deftag"></span>默认变量表</button><button><span data-i="scr"></span>根画面</button></nav>
  <span class="tray" data-i="tray"></span>
  <span class="stmsg"><span data-i="err"></span>到 PLC_1 的连接已中止。</span>
</footer>
<div class="os" aria-hidden="true"><i class="orb"></i><i class="app c1"></i><i class="app c2"></i><i class="app c3"></i><i class="app c4"></i><i class="app c5"></i><i class="app c6"></i><i class="app c7"></i><i class="app c8"></i><i class="app c9"></i><i class="show"></i></div>

<div class="mark"><p class="cn"><span>西门子工业</span><span>技术论坛</span></p><p class="url">support.industry.siemens.com/cs</p></div>
<svg class="arrow" viewBox="0 0 1010 690"><path d="M3 3L21 5 17 9 1005 680 1004 681 12 16 10 20z" fill="#ff1e10"/></svg>
<p class="note">为什么我找不到date and time 这个数据快呢？</p>
<script src="script.js"></script>
</body>
</html>
```
FILE: styles.css
```css
* { box-sizing: border-box; margin: 0; padding: 0; }
html, body { height: 100%; }
body { display: flex; flex-direction: column; position: relative; overflow: hidden; font: 16px/18px "Open Sans", "Noto Sans CJK SC", sans-serif; color: #000; background: #cbcbcb; }
button, input, select { font: inherit; color: inherit; border-radius: 0; }
button { border: 0; background: none; display: inline-flex; align-items: center; justify-content: center; white-space: nowrap; }
h1, h2, h3 { font-size: 16px; font-weight: 700; }
a { color: inherit; text-decoration: none; }
ul { list-style: none; }
table { border-collapse: separate; border-spacing: 0; table-layout: fixed; width: 100%; }
svg { width: 16px; height: 16px; display: block; flex: none; }
.sprite { position: absolute; width: 0; height: 0; }
[data-i] { display: inline-flex; align-items: center; justify-content: center; flex: none; }
.lt { font-size: 12px; line-height: 0; }
.mid { font-family: "Noto Sans CJK TC", sans-serif; line-height: 0; }
.grow { flex: 1; }

.titlebar { height: 23px; flex: none; display: flex; align-items: center; background: linear-gradient(#8c8c8c, #5c5c5c 7px, #1c1c1c 7px); border-bottom: 1px solid #000; color: #fff; padding: 2px 4px 0 6px; }
.logo { font: 700 8px/8px "Open Sans", sans-serif; width: 22px; color: #c8dcf4; }
.titlebar h1 { flex: 1; font-size: 12px; font-weight: 600; }
.titlebar h1 b { font-size: 15px; }
.wbtns button { width: 16px; height: 16px; }
.wbtns svg { width: 12px; height: 12px; }

.menuarea { height: 51px; flex: none; display: flex; justify-content: space-between; border-bottom: 1px solid #1d2333; background: #cbcbcb; }
.menu { display: flex; gap: 20px; padding: 5px 12px 0; height: 26px; line-height: 20px; }
.toolbar { height: 27px; flex: none; display: flex; align-items: center; background: #e9e9e9; padding: 0 5px; }
.toolbar.main { background: none; height: 24px; padding: 0 0 0 13px; gap: 8px; font-size: 13px; }
.toolbar.main .sep { margin: 0 -2px; }
.toolbar.main .txt { margin-left: -3px; }
.toolbar.ed { gap: 8px; padding: 0 16px 0 7px; }
.toolbar.ed .sep { margin: 0 -2px; }
.toolbar.ed .txt { margin: 0 4px 0 2px; }
.sep { width: 1px; height: 24px; border-left: 1px dotted #8c8c8c; }
.tb { width: 16px; height: 18px; }
.tb.nar { width: 8px; margin-left: -4px; }
.tb.nar svg { width: 8px; }
.framed { width: 22px; height: 22px; border: 1px solid #2c5cd0; border-radius: 2px; background: #fff; }
.txt { white-space: nowrap; }
.txt.off { color: #8c8c8c; }
.search { width: 120px; height: 18px; border: 1px solid #777; background: #fff; font-size: 14px; padding: 0 3px; }
.search::placeholder { color: #777; opacity: 1; }
.brand { font-size: 14px; line-height: 16px; padding: 13px 47px 0 0; white-space: nowrap; font-weight: 500; text-align: right; }
.brand b { display: block; color: #666; font-size: 16px; line-height: 14px; margin-right: -24px; }

.work { flex: 1; min-height: 0; display: grid; grid-template-columns: 23px 457px 1fr 206px 24px; }
.rail { background: #b0b0b0; }
.rail.left { padding-top: 100px; }
.rail.left > span { writing-mode: vertical-rl; transform: rotate(180deg); color: #fff; font-size: 14px; font-weight: 700; width: 22px; height: 66px; line-height: 22px; display: block; white-space: nowrap; }
.rail.left .lt { font-size: 13px; }
.rail.left::after { content: ""; display: block; height: 1px; background: #fff; margin-top: 79px; }
.rail.right { border-left: 1px solid #555; padding-top: 30px; }
.rail.right button { width: 20px; flex-direction: column; justify-content: flex-start; gap: 4px; height: 74px; border: 1px solid #777; border-left: 0; background: #e4e4e4; margin-bottom: 2px; padding-top: 2px; display: flex; }
.rail.right button + button { height: 58px; background: #cbcbcb; color: #444; }
.rail.right b { writing-mode: vertical-rl; text-orientation: sideways; font-size: 14px; }

.side, .center, .tasks { display: flex; flex-direction: column; min-width: 0; min-height: 0; }
.side { border-left: 1px solid #1d2333; }
.center { border-left: 2px solid #1d2333; border-right: 0; }
.tasks { border-left: 3px solid #1d2333; border-right: 1px solid #1d2333; background: #e9e9e9; }
.phead { height: 27px; flex: none; border-bottom: 4px solid #f4f4f4; display: flex; align-items: center; justify-content: space-between; color: #fff; padding: 0 3px 0 5px; }
.phead.gray { background: #b0b0b0; }
.phead.navy { background: #2d344e; }
.phead h2 { font-weight: 500; font-size: 15px; }
.phead.navy h2 { font-weight: 600; }
.pb { display: flex; color: #fff; }
.tasks .pb { gap: 3px; }
.navy .pb { gap: 2px; }
.crumb { display: flex; align-items: center; }
.crumb span { font-size: 16px; white-space: nowrap; }
.crumb > span:nth-child(3) { font-size: 14px; }
.phead.navy .lt { font-size: 14px; }
.crumb i { margin: 0 12px; border: 4px solid transparent; border-left: 5px solid #fff; border-right: 0; }
.tabzone { height: 25px; flex: none; display: flex; align-items: flex-end; padding: 0 5px; border-bottom: 1px solid #777; background: #cbcbcb; }
.tab { height: 21px; margin-bottom: -1px; border: 1px solid #777; background: #d4d4d4; color: #444; padding: 0 10px; font-weight: 500; gap: 5px; }
.tab.wide { padding: 0 15px; }
.low .tab:first-child { padding-right: 6px; }
.tab.on { background: linear-gradient(#fff, #e9e9e9); border-bottom-color: #e9e9e9; color: #000; font-weight: 700; padding: 0 14px; }
.side .tab { padding: 0 14px; font-weight: 500; }
.side .toolbar { gap: 6px; }
.blank { height: 21px; flex: none; background: #c3c3c3; }

.treebox { flex: 663 1 0; min-height: 0; overflow: hidden; display: flex; background: #c3c3c3; }
.tree { flex: 1; }
.tree li { height: 19px; border-bottom: 1px solid #fff; display: flex; align-items: center; gap: 5px; white-space: nowrap; background: linear-gradient(90deg, #efefef calc(100% - 20px), #c3c3c3 0, #c3c3c3 calc(100% - 19px), #efefef 0); }
.tree li.hd { background: linear-gradient(90deg, #e1e1e1 calc(100% - 20px), #c3c3c3 0, #c3c3c3 calc(100% - 19px), #e1e1e1 0); }
.tree li.en, .tree li.b { font-size: 12px; }
.tree li.b { font-size: 13px; font-weight: 600; }
.tree li.sel { background: #d8dee2; outline: 1px dashed #777; outline-offset: -1px; }
.tree li.l0 { padding-left: 4px; } .tree li.l1 { padding-left: 22px; } .tree li.l2 { padding-left: 40px; } .tree li.l3 { padding-left: 58px; }
.tw { width: 12px; flex: none; display: flex; justify-content: center; margin-right: -5px; }
.tw + * { margin-left: 2px; }
.ar { display: inline-block; border: 4px solid transparent; }
.ar.d { border-top: 5px solid #000; border-bottom: 0; }
.ar.r { border-left: 5px solid #000; border-right: 0; }

.vsb { width: 18px; flex: none; background: #c3c3c3; display: flex; flex-direction: column; }
.side .vsb { margin-right: 1px; margin-left: 1px; }
.vsb button, .hsb button { width: 18px; height: 18px; flex: none; border: 1px solid #8c8c8c; background: #e9e9e9; box-shadow: inset 0 0 0 1px #fff; color: #555; }
.vsb .end { margin-top: auto; }
.thumb { display: block; border: 1px solid #8c8c8c; box-shadow: inset 0 0 0 1px #fff; background: repeating-linear-gradient(#555 0 1px, transparent 1px 2px) center/8px 7px no-repeat, linear-gradient(90deg, #e9e9e9, #cfcfcf); margin-top: 1px; }
.tree-thumb { flex: 0 1 264px; }
.pop-thumb { flex: 0 1 353px; margin-top: 0; }
.hsb { display: flex; height: 18px; flex: none; background: #c3c3c3; }
.hthumb { flex: 0 0 390px; margin-left: 1px; border: 1px solid #8c8c8c; background: repeating-linear-gradient(90deg, #555 0 1px, transparent 1px 2px) center/7px 8px no-repeat, linear-gradient(#f0f0f0, #cfcfcf); }
.hsb button:last-child { margin-left: auto; }

.sect { height: 20px; flex: none; display: flex; align-items: center; background: linear-gradient(#e9e9e9, #d4d4d4); border-bottom: 1px solid #777; }
.sect button { width: 21px; height: 19px; border-right: 1px solid #777; }
.sect h2 { padding-left: 5px; }
.sect.top { height: 24px; border-top: 3px solid #1d2333; }
.tasks .sect { height: 24px; border-top: 3px solid #999; }
.dstrip { height: 25px; flex: none; background: #cbcbcb; border-bottom: 1px solid #777; }
.dtool { height: 27px; flex: none; background: #e9e9e9; }
.dbox { flex: 450 1 0; min-height: 0; display: flex; flex-direction: column; }
.lines { flex: 1; }
.lines.light { background: repeating-linear-gradient(#efefef 0 18px, #fff 18px 19px); }
.lines.dark { background: linear-gradient(90deg, #c8c8c8 24px, transparent 24px), linear-gradient(90deg, transparent 1033px, #fff 1033px 1034px, transparent 1034px), repeating-linear-gradient(transparent 0 18px, #fff 18px 19px), linear-gradient(90deg, #d9d9d9 214px, #e1e1e1 214px); }

th { height: 19px; line-height: 17px; font-size: 13px; font-weight: 400; text-align: left; padding: 0 4px; border-top: 1px solid #a4a4a4; border-bottom: 1px solid #a4a4a4; border-right: 1px solid #a4a4a4; background: linear-gradient(#ededed, #cdcdcd); white-space: nowrap; overflow: hidden; }
th:last-child { border-right: 0; }
th.hot { background: linear-gradient(#f0f4f8, #d4dae2); }
td { height: 19px; line-height: 18px; padding: 0; border-bottom: 1px solid #fff; white-space: nowrap; }
td > [data-i] { vertical-align: top; height: 18px; }
.dtable th { background: linear-gradient(#efefef, #dfe3e8); }
.dtable td { background: #d0d6da; font-size: 12px; padding-left: 4px; border-top: 1px solid #fff; height: 20px; }
.dtable td:first-child { padding-left: 1px; }
.dtable .nm { font-size: 16px; outline: 1px dashed #777; outline-offset: -1px; }
.nm .ar { margin: 0 10px 1px 3px; }
.ty { position: relative; }
.bt { position: absolute; right: 0; top: 0; display: flex; }
.bt button { width: 16px; height: 18px; border: 1px solid #888; background: #e9e9e9; overflow: hidden; }
.bt .wide { width: 22px; color: #888; }
.bt .wide svg { width: 10px; height: 10px; }
.w19 { width: 19px; } .w24 { width: 24px; } .w28 { width: 28px; } .w50 { width: 50px; } .w52 { width: 52px; } .w54 { width: 54px; } .w69 { width: 69px; } .w71 { width: 71px; } .w80 { width: 80px; } .w81 { width: 81px; } .w84 { width: 84px; } .w100 { width: 100px; } .w116 { width: 116px; } .w120 { width: 120px; } .w160 { width: 160px; } .w171 { width: 171px; } .w204 { width: 204px; } .w260 { width: 260px; } .w345 { width: 345px; }

.dbname { height: 21px; flex: none; line-height: 21px; background: #d8d8d8; padding-left: 25px; font-weight: 600; }
.grid { flex: 607 1 0; min-height: 0; display: flex; flex-direction: column; }
.etable td { background: #e1e1e1; border-right: 1px solid #fff; font-size: 12px; }
.etable td:last-child, .etable td:nth-child(-n+3) { border-right: 0; }
.etable .cur td { background: #efefef; }
.etable .cur td.ro { background: #e1e1e1; }
.etable td.no, .etable .cur td.no { background: #c8c8c8; color: #777; font-size: 13px; padding-left: 5px; }
.etable .cur td.no { background: #bcc8d4; }
.etable .ar { margin: 0 10px 1px 6px; }
.etable .dot { display: inline-block; width: 5px; height: 6px; background: #2848c8; margin: 0 9px 3px 6px; }
.fl { font-size: 16px; line-height: 18px; }
.ck { text-align: center; }
.ck input { vertical-align: top; margin-top: 1px; }
input[type=checkbox], input[type=radio] { appearance: none; width: 15px; height: 15px; border: 1px solid #666; border-radius: 2px; background: linear-gradient(#fff, #c8c8c8); box-shadow: inset 0 0 0 1px #eee; position: relative; flex: none; }
input[type=checkbox]:disabled, input[type=radio]:disabled { border-color: #aaa; background: linear-gradient(#fff, #e4e4e4); }
input[type=checkbox]:checked { background: linear-gradient(#d8f4ff, #30c8f0); border-color: #345; }
input[type=checkbox]:checked::after { content: ""; position: absolute; left: 4px; top: 0; width: 5px; height: 9px; border: solid #1048a0; border-width: 0 3px 3px 0; transform: rotate(40deg); }
input[type=radio] { border-radius: 50%; }
input[type=radio]:checked { background: radial-gradient(circle, #104890 0 2px, transparent 3px), linear-gradient(#fff, #30c8f0); border-color: #234; }
input[type=radio]:checked:disabled { background: radial-gradient(circle, #999 0 2px, transparent 3px), #e9e9e9; border-color: #aaa; }

.etable td.edit { position: relative; overflow: visible; }
.combo { display: flex; height: 19px; border: 1px solid #1c50c8; background: #fff; margin-bottom: -1px; }
.combo input { flex: 1; min-width: 0; border: 0; background: #2f5fd0; color: #fff; margin: 2px 1px 2px 1px; overflow: hidden; font-size: 12px; line-height: 13px; }
.combo button { width: 15px; border-left: 1px solid #888; background: #e9e9e9; overflow: hidden; }
.combo button svg { width: 14px; height: 14px; }
.combo .dn { width: 16px; }
.combo .dn svg, .cbx svg { width: 10px; height: 10px; }
.popup { position: absolute; left: 0; top: 19px; z-index: 5; width: 629px; border: 1px solid #111; display: flex; background: #efefef; }
.popup ul { flex: 1; }
.popup li { height: 19px; line-height: 21px; border-bottom: 1px solid #fff; padding-left: 5px; font-size: 12px; }
.popup li.hl { background: #e4ecf4; }

.istrip { height: 30px; flex: none; border-top: 3px solid #1d2333; border-bottom: 4px solid #f4f4f4; background: #b0b0b0; display: flex; justify-content: flex-end; align-items: center; }
.itabs { display: flex; gap: 2px; align-self: flex-end; }
.itabs button { height: 20px; border: 1px solid #777; border-bottom: 0; background: #cfcfcf; color: #444; font-size: 16px; font-weight: 500; padding: 0 19px 0 2px; gap: 4px; }
.itabs .on { background: #f4f4f4; color: #000; font-weight: 700; padding-right: 4px; border-color: #f4f4f4; gap: 5px; }
.istrip .pb { padding: 0 3px 0 18px; gap: 2px; }
.tabzone.low { padding-left: 6px; gap: 1px; }
.low .tab.on { padding: 0 12px; }
.toolbar.flt { gap: 3px; padding: 0 3px; height: 28px; }
.flt .framed { width: 21px; }
.flt select { height: 18px; width: 180px; margin-left: 3px; border: 1px solid #777; background: #fff; font-size: 13px; appearance: none; padding: 0 5px; }
.result { height: 19px; flex: none; padding-left: 14px; background: #efefef; font-size: 15px; }
.logbox { flex: 480 1 0; min-height: 0; display: flex; flex-direction: column; overflow: hidden; }
.log th.ex { padding-left: 7px; color: #765; }
.log th:nth-child(n+2):nth-child(-n+6) { border-right: 0; }
.log td { background: #efefef; font-size: 12px; }
.log td:nth-child(1) { padding-left: 6px; }
.log .hd td:not(:last-child) { background: #e1e1e1; }
.log .sel td:not(:last-child) { background: #d0d6da; }
.log .sel td:nth-child(4) { background: #d8dee2; }
.log .sel td:first-child { outline: 1px dashed #777; outline-offset: -1px; }
.log .ar { margin: 0 10px 2px 6px; }
.log .i1 { padding-left: 18px; } .log .i2 { padding-left: 36px; } .log .i3 { padding-left: 54px; } .log .i4 { padding-left: 72px; }
.log .cn { font-size: 16px; overflow: hidden; }
.log .sel .cn { font-size: 15px; }
.log .go { padding-left: 17px; color: #606060; }
.log .go.g { color: #18903c; }
.log .n1 { padding-left: 54px; } .log .n2 { padding-left: 24px; } .log .tm { padding-left: 40px; }
.log .n1, .log .n2, .log .tm { font-size: 13px; }

.opt { height: 25px; flex: none; line-height: 20px; font-size: 15px; padding-left: 6px; background: linear-gradient(#fff, #d8d8d8); border-bottom: 1px solid #777; border-top: 3px solid #e9e9e9; }
.tasks .toolbar { padding-right: 2px; }
.ff { flex: 1; padding: 15px 4px 0 12px; font-size: 15px; }
.cap { display: block; height: 22px; line-height: 20px; padding-left: 3px; }
.cbx { display: flex; width: 178px; height: 18px; border: 1px solid #888; background: #fff; }
.cbx input { flex: 1; min-width: 0; border: 0; }
.cbx button { width: 16px; border-left: 1px solid #888; background: linear-gradient(#fff, #ccc); }
.opts { padding-top: 6px; }
.opts label { height: 24px; display: flex; align-items: center; gap: 5px; }
.opts span { white-space: nowrap; overflow: hidden; }
.opts .off { color: #999; }
.cut4 { width: 74px; } .cut6 { width: 102px; } .cut7 { width: 116px; }
.opts.two { padding: 6px 0 3px; }
.opts.three { padding: 5px 0 3px; }
.btns { display: flex; gap: 6px; padding-bottom: 15px; }
.btns button { flex: 1; height: 20px; border: 1px solid #999; border-radius: 2px; background: linear-gradient(#f8f8f8, #dcdcdc); color: #999; }

.status { height: 29px; flex: none; background: #1c1c1c; color: #fff; display: flex; align-items: center; }
.portal { width: 181px; padding-left: 31px; display: flex; align-items: center; gap: 6px; font-weight: 600; white-space: pre; }
.portal, .portal .lt { font-size: 14px; }
.stmsg { font-size: 14px; }
.docs { display: flex; gap: 3px; flex: 1; }
.docs button { width: 113px; height: 20px; background: #c3c3c3; color: #000; justify-content: flex-start; gap: 4px; padding-left: 3px; font-size: 13px; }
.docs .on { background: #fff; font-weight: 700; }
.docs .en { font-size: 12px; }
.tray svg { width: 20px; height: 20px; }
.stmsg { display: flex; align-items: center; gap: 4px; padding-left: 3px; margin-left: 6px; border-left: 1px solid #666; height: 29px; width: 312px; white-space: pre; }
.os { height: 9px; flex: none; display: flex; overflow: hidden; background: linear-gradient(#a8b8c4 1px, #54718e 1px, #46688c); padding-left: 16px; }
.orb { width: 32px; height: 32px; border-radius: 50%; border: 2px solid #dde8f0; background: #5c7c9c; flex: none; margin: 1px 24px 0 0; }
.app { width: 160px; margin-right: 2px; height: 9px; flex: none; border: 1px solid #c4d0d8; border-bottom: 0; background: linear-gradient(90deg, #b8c4cc, #70889c); }
.app::before { content: ""; display: block; width: 26px; height: 20px; margin: 2px 0 0 12px; border-radius: 50%; background: #1890f0; }
.c2::before { background: #208050; border-radius: 0; transform: skewX(-50deg); } .c3::before { background: #90d060; width: 8px; } .c4::before { background: #3840b0; border-radius: 0; width: 40px; margin-top: 0; } .c5::before { background: #e83018; border-radius: 0; } .c6::before { background: #e8d010; } .c7::before { background: #60b0a0; } .c8::before { background: #3c4458; border-radius: 0; width: 40px; } .c9::before { background: #3c4458; border-radius: 0; width: 40px; }
.show { margin-left: auto; width: 14px; border: 1px solid #9cb0c0; background: #607890; }

.arrow { position: absolute; left: 1020px; top: 402px; width: 1010px; height: 690px; z-index: 6; pointer-events: none; }
.note { position: absolute; left: 1442px; top: 255px; z-index: 6; color: #ff1e10; font-size: 33px; line-height: 40px; white-space: nowrap; }
.mark { position: absolute; left: 1128px; top: 756px; z-index: 7; transform: rotate(-30deg); transform-origin: 0 100%; color: #f6f6f6; opacity: .55; white-space: nowrap; text-shadow: 0 0 3px #aaa; pointer-events: none; }
.mark .cn { font-size: 40px; line-height: 42px; font-weight: 500; display: flex; gap: 20px; }
.mark .url { font: 27px/28px "Liberation Sans", sans-serif; }
```
FILE: script.js
```js
const icon = (...ids) => '<svg viewBox="0 0 ' + (ids[0] === 'dd' ? '8 16' : ids[0] === 'tray' ? '20 20' : '16 16') + '">' + ids.map(i => '<use href="#' + i + '"/>').join('') + '</svg>';

// Toolbars: icon ids, "|" separators and t:/g:/T: text commands
document.querySelectorAll('[data-tools]').forEach(bar => {
  const html = bar.dataset.tools.split(' ').map(k => {
    if (k === '|') return '<i class="sep"></i>';
    if (/^[tTg]:/.test(k)) return '<span class="txt' + (k[0] === 'g' ? ' off' : '') + '">' + k.slice(2) + '</span>';
    return '<button class="tb' + (k === 'dd' ? ' nar' : '') + '" aria-label="' + k + '">' + icon(k) + '</button>';
  }).join('');
  bar.insertAdjacentHTML('afterbegin', html);
});

document.querySelectorAll('[data-i]').forEach(e => { e.innerHTML = icon(e.dataset.i); });

// Project tree: level, twisty (d/r/-), icons, label, row class
const tree = [
  [0, 'd', 'page', '测试专用', 'hd'],
  [1, '-', 'add', '添加新设备'],
  [1, '-', 'net', '设备和网络'],
  [1, 'd', 'folder o-plc', 'PLC_1 [CPU 1214C DC/DC/DC]', 'hd b'],
  [2, '-', 'cfg', '设备组态'],
  [2, '-', 'diag', '在线和诊断'],
  [2, 'd', 'folder o-blk', '程序块'],
  [3, '-', 'add', '添加新块'],
  [3, '-', 'ob', 'Main [OB1]', 'en'],
  [3, '-', 'db', '数据块_1 [DB1]', 'sel'],
  [3, 'r', 'folderg o-blkg', '系统块'],
  [2, 'r', 'folder o-gear', '工艺对象'],
  [2, 'r', 'folder o-01', '外部源文件'],
  [2, 'r', 'folder o-tag', 'PLC 变量'],
  [2, 'r', 'folder o-str', 'PLC 数据类型'],
  [2, 'r', 'folder o-watch', '监控与强制表'],
  [2, 'r', 'folder o-bak', '在线备份'],
  [2, 'r', 'folder o-trc', 'Traces', 'en'],
  [2, 'r', 'folder o-prx', '设备代理数据'],
  [2, '-', 'info', '程序信息'],
  [2, '-', 'txt', 'PLC 报警文本列表'],
  [2, 'r', 'folder o-plc', '本地模块'],
  [1, 'd', 'folder o-hmi', 'HMI_1 [KTP700 Basic PN]', 'hd b'],
  [2, '-', 'cfg', '设备组态'],
  [2, '-', 'diag', '在线和诊断'],
  [2, '-', 'wrench', '运行系统设置'],
  [2, 'd', 'folder o-scr', '画面'],
  [3, '-', 'add', '添加新画面'],
  [3, '-', 'root', '根画面'],
  [2, 'r', 'folder o-wr', '画面管理'],
  [2, 'd', 'folder o-tag', 'HMI 变量'],
  [3, '-', 'alltag', '显示所有变量'],
  [3, '-', 'add', '添加新变量表'],
  [3, '-', 'deftag', '默认变量表 [15]'],
  [2, '-', 'conn', '连接']
];
document.getElementById('tree').innerHTML = tree.map(([l, a, ic, t, c]) =>
  '<li class="l' + l + ' ' + (c || '') + '"><span class="tw">' + (a === '-' ? '' : '<i class="ar ' + a + '"></i>') + '</span>' +
  icon(...ic.split(' ')) + '<span>' + t + '</span></li>').join('');

const types = ['AOM_IDENT', 'Array [lo .. hi] of type', 'Bool', 'Byte', 'CONN_ANY', 'CONN_OUC', 'CONN_PRG', 'CREF', 'Char', 'DB_ANY', 'DB_DYN', 'DB_WWW', 'DInt', 'DTL', 'DWord', 'Date', 'EVENT_ANY', 'EVENT_ATT', 'EVENT_HWINT', 'ErrorStruct', 'HW_ANY', 'HW_DEVICE', 'HW_DPSLAVE', 'HW_HSC', 'HW_IEPORT', 'HW_INTERFACE', 'HW_IO', 'HW_IOSYSTEM', 'HW_PTO', 'HW_PWM', 'HW_SUBMODULE', 'IEC_COUNTER', 'IEC_DCOUNTER', 'IEC_SCOUNTER', 'IEC_TIMER', 'IEC_UCOUNTER'];
document.getElementById('types').innerHTML = types.map(t => '<li role="option"' + (t === 'IEC_COUNTER' ? ' class="hl"' : '') + '>' + t + '</li>').join('');

// Compile log: icon, level, path, message, errors, warnings, time, arrow, row class
const log = [
  ['warn', 0, 'HMI_1', '', '', '', '21', 'k', 'hd'],
  ['inf', 0, '', '软件编译开始。', '', '', '21', 'k'],
  ['warn', 1, '画面管理', '', 0, 6, '23', 'k'],
  ['warn', 2, '模板', '', 0, 6, '23', 'k'],
  ['warn', 3, 'Template_1', '', 0, 6, '23', 'k']
];
for (let n = 0; n < 6; n++) {
  log.push(['warn', 4, n ? 'Template_Button..' : 'Template_Button', '', 0, 1, '23', 'k']);
  log.push(['warn', 0, '', "按钮 'Template_Button" + (n ? '_' + n : '') + "' 没有定义语言为 zh-CN 的 '关" + (n ? '' : "' 文"), '', '', '23', 'g']);
}
log.push(['inf', 0, '', '使用的变量数：15。', '', '', '23', 'k'],
  ['inf', 0, '', '使用的 PowerTag 的数量：14', '', '', '23', 'k'],
  ['inf', 0, '', '字体使用 117148 字节。', '', '', '23', 'k'],
  ['inf', 0, '', '软件编译已完成（设备版本：14.0.1.0）。', '', '', '23', 'k'],
  ['warn', 0, '', '编译完成（错误：0；警告：6）', '', '', '23', '', 'sel']);
document.getElementById('log').innerHTML = log.map(([ic, l, p, m, e, w, s, g, c]) =>
  '<tr class="' + (c || '') + '"><td><span data-i>' + icon(ic) + '</span></td><td class="i' + l + (/[\u4e00-\u9fff]/.test(p) ? ' cn' : '') + '">' + (p ? '<i class="ar d"></i>' + p : '') +
  '</td><td class="cn">' + m + '</td><td class="go ' + g + '">' + (g ? '<span data-i>' + icon('goto') + '</span>' : '') +
  '</td><td class="n1">' + e + '</td><td class="n2">' + w + '</td><td class="tm">19:09:' + s + '</td><td></td></tr>').join('');

// Latin runs inside Chinese labels use the smaller interface size; colons and question marks are centred
const walk = document.createTreeWalker(document.body, NodeFilter.SHOW_TEXT);
const nodes = [];
while (walk.nextNode()) nodes.push(walk.currentNode);
nodes.forEach(n => {
  const p = n.parentElement;
  if (/SCRIPT|OPTION/.test(p.tagName) || p.closest('svg, .titlebar')) return;
  if (!/[\u4e00-\u9fff]/.test(n.data) || !/[A-Za-z0-9：？]/.test(n.data)) return;
  const f = document.createElement('span');
  let h = n.data;
  if (!p.closest('.note')) h = h.replace(/[\x21-\x7e][\x20-\x7e]*/g, '<span class="lt">$&</span>');
  f.innerHTML = h.replace(/[：；？]/g, '<span class="mid" lang="zh-TW">$&</span>');
  p.replaceChild(f, n);
});
```
